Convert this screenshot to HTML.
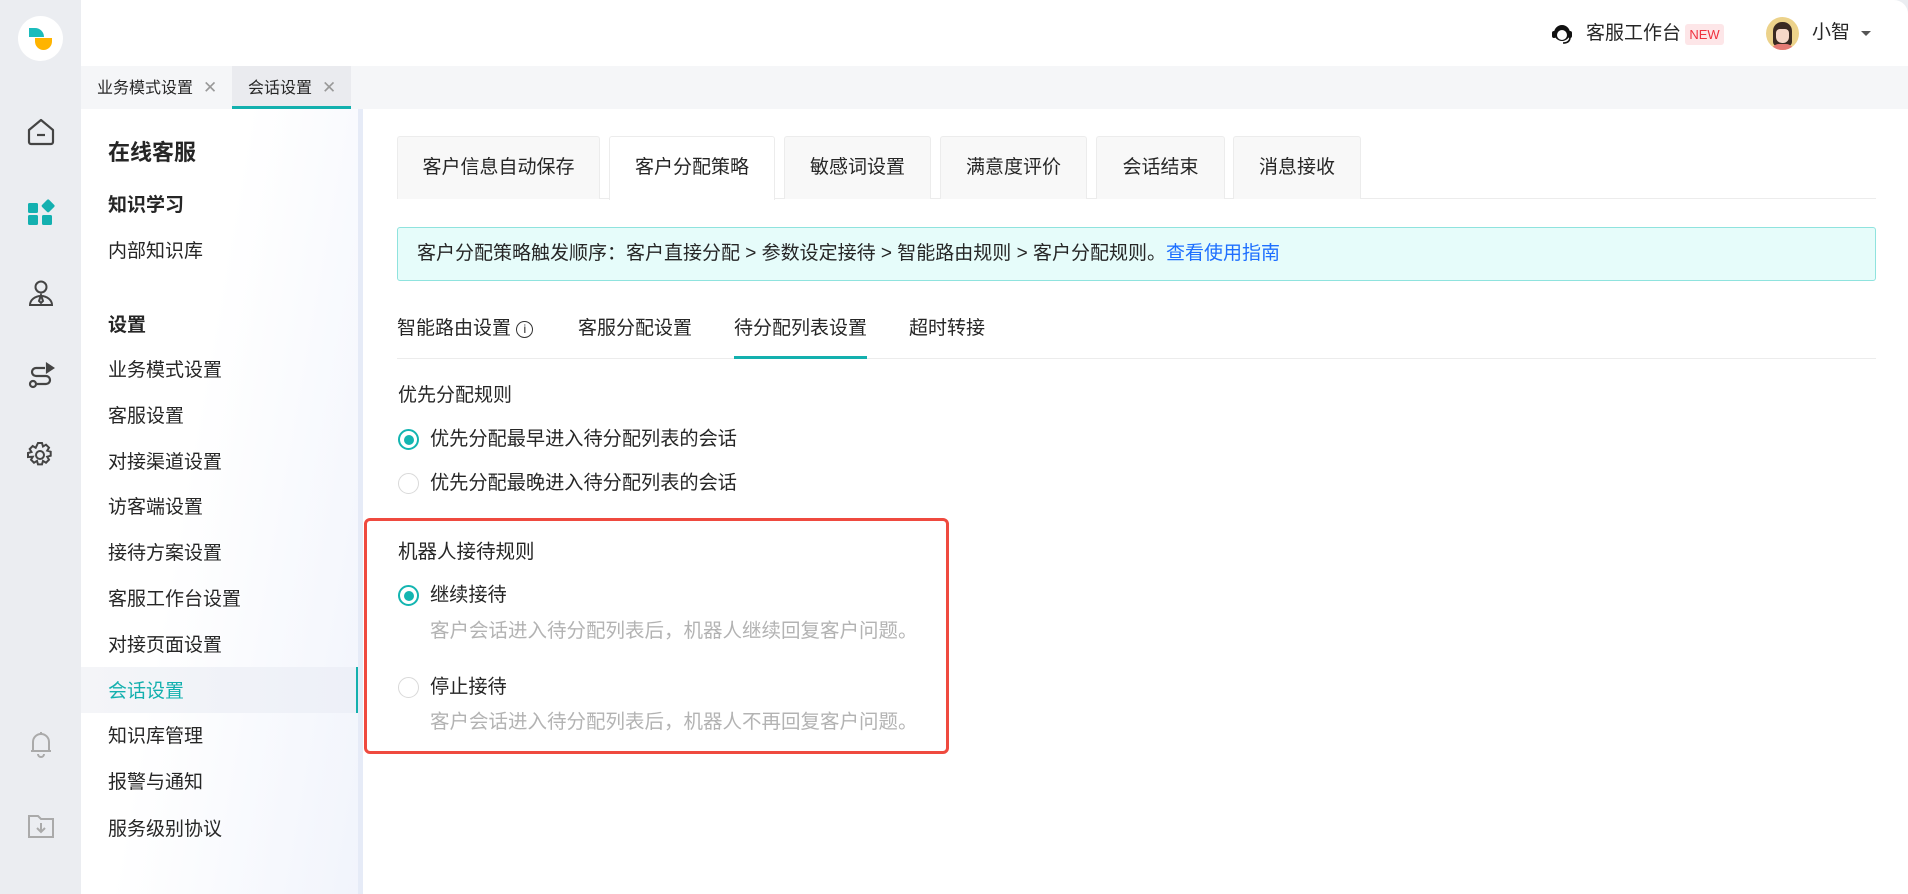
<!DOCTYPE html>
<html><head><meta charset="utf-8"><style>
*{box-sizing:border-box;margin:0;padding:0}
body{width:1908px;height:894px;overflow:hidden;background:#ebedf1;font-family:"Liberation Sans","Noto Sans CJK SC",sans-serif;color:#262626;position:relative}
.abs{position:absolute}
.top{left:81px;top:0;width:1827px;height:66px;background:#fff;border-top-right-radius:14px}
.tabbar{left:81px;top:66px;width:1827px;height:43px;background:#f5f6f8}
.tb{top:66px;height:43px;font-size:16px;line-height:43px;color:#262626}
.x{color:#999;font-size:17px;margin-left:10px}
.side{left:81px;top:109px;width:282px;height:785px;background:linear-gradient(100deg,#fff 40%,#f1f4fc)}
.main{left:363px;top:109px;width:1545px;height:785px;background:#fff}
.si{left:108px;font-size:19px;line-height:24px}
.ptab{top:136px;height:63px;border:1px solid #ececec;border-bottom:none;background:#f8f8f8;font-size:19px;line-height:62px;text-align:center;border-radius:3px 3px 0 0}
.sub{top:316px;font-size:19px;line-height:26px}
.radio{width:21px;height:21px;border-radius:50%;border:1px solid #d9d9d9;background:#fff}
.radio.on{border:2px solid #13b5b1}
.radio.on::after{content:"";position:absolute;left:3.5px;top:3.5px;width:10px;height:10px;border-radius:50%;background:#13b5b1}
.lbl{left:430px;font-size:19.2px;line-height:28px}
.desc{left:430px;font-size:19.5px;line-height:26px;color:#b3b3b3}
</style></head><body>
<div class="abs" style="left:18px;top:16px;width:45px;height:45px;border-radius:50%;background:#fff"></div>
<div class="abs" style="left:29px;top:28px;width:15px;height:9px;background:#1bbcbc;border-radius:0 9px 0 0"></div>
<div class="abs" style="left:35px;top:38px;width:17px;height:12px;background:#ffb400;border-radius:0 0 9px 9px"></div>
<svg class="abs" style="left:27px;top:118px" width="28" height="28" viewBox="0 0 28 28" fill="none" stroke="#444" stroke-width="2.2" stroke-linejoin="round"><path d="M2 12 L14 2 L26 12 V24 a2 2 0 0 1-2 2 H4 a2 2 0 0 1-2-2 Z"/><path d="M10 17h8"/></svg>
<svg class="abs" style="left:27px;top:198px" width="28" height="28" viewBox="0 0 28 28" fill="#13b0b0"><rect x="1" y="5" width="10" height="10" rx="1.5"/><rect x="14" y="2" width="10" height="10" rx="1.5" transform="rotate(45 19 10)"/><rect x="1" y="17" width="10" height="10" rx="1.5"/><rect x="15" y="17" width="10" height="10" rx="1.5"/></svg>
<svg class="abs" style="left:27px;top:279px" width="28" height="28" viewBox="0 0 28 28" fill="none" stroke="#444" stroke-width="2"><circle cx="14" cy="8" r="5.5"/><path d="M3 26 a11 9 0 0 1 22 0 Z"/><path d="M14 16 l-2 6 2 2 2-2z"/></svg>
<svg class="abs" style="left:27px;top:362px" width="28" height="28" viewBox="0 0 28 28" fill="none" stroke="#444" stroke-width="2.2"><path d="M18 6 H9 a4 4 0 0 0 0 8 H19 a4 4 0 0 1 0 8 H10"/><circle cx="6" cy="22" r="3"/><path d="M20 2 l6 4 -6 4z" fill="#444"/></svg>
<svg class="abs" style="left:26px;top:441px" width="28" height="28" viewBox="0 0 28 28" fill="none" stroke="#444" stroke-width="2"><path d="M12 2h4l1 3.5 3-1.8 3 3-1.8 3 3.5 1v4l-3.5 1 1.8 3-3 3-3-1.8-1 3.5h-4l-1-3.5-3 1.8-3-3 1.8-3L2 16v-4l3.5-1-1.8-3 3-3 3 1.8z"/><circle cx="14" cy="14" r="4"/></svg>
<svg class="abs" style="left:27px;top:730px" width="28" height="28" viewBox="0 0 28 28" fill="none" stroke="#aaa" stroke-width="2"><path d="M6 21 V12 a8 8 0 0 1 16 0 V21 H4 h20"/><path d="M11 24 a3 3 0 0 0 6 0"/><path d="M14 2v2"/></svg>
<svg class="abs" style="left:27px;top:812px" width="28" height="28" viewBox="0 0 28 28" fill="none" stroke="#aaa" stroke-width="2"><path d="M2 4 H11 l3 3 H26 V25 H2 Z"/><path d="M14 11v9 M10 16l4 4 4-4"/></svg>
<div class="abs top"></div>
<svg class="abs" style="left:1550px;top:22px" width="24" height="24" viewBox="0 0 24 24"><circle cx="12" cy="11" r="8" fill="#111"/><circle cx="12" cy="13" r="5" fill="#fff"/><rect x="2" y="9" width="4" height="7" rx="2" fill="#111"/><rect x="18" y="9" width="4" height="7" rx="2" fill="#111"/><path d="M20 15 q0 6-7 6" stroke="#111" stroke-width="1.6" fill="none"/></svg>
<div class="abs" style="left:1586px;top:21px;font-size:19px;line-height:26px">客服工作台</div>
<div class="abs" style="left:1685px;top:24px;width:39px;height:21px;background:#fde6e8;color:#f0313f;font-size:13px;line-height:21px;text-align:center;border-radius:3px">NEW</div>
<div class="abs" style="left:1766px;top:17px;width:33px;height:33px;border-radius:50%;background:#ecd28a;overflow:hidden"><div class="abs" style="left:7px;top:5px;width:19px;height:24px;border-radius:9px 9px 4px 4px;background:#3a2a22"></div><div class="abs" style="left:10px;top:12px;width:13px;height:14px;border-radius:4px 4px 6px 6px;background:#f6d8c8"></div><div class="abs" style="left:5px;top:27px;width:23px;height:10px;border-radius:8px 8px 0 0;background:#e57a74"></div></div>
<div class="abs" style="left:1812px;top:20px;font-size:19px;line-height:26px">小智</div>
<div class="abs" style="left:1861px;top:31px;width:0;height:0;border-left:5px solid transparent;border-right:5px solid transparent;border-top:5px solid #555"></div>
<div class="abs tabbar"></div>
<div class="abs tb" style="left:97px">业务模式设置<span class="x">✕</span></div>
<div class="abs" style="left:232px;top:66px;width:119px;height:43px;background:#eaebef;border-bottom:3px solid #13b0ae"></div>
<div class="abs tb" style="left:248px">会话设置<span class="x">✕</span></div>
<div class="abs side"></div>
<div class="abs" style="left:358px;top:109px;width:5px;height:785px;background:#e6ebf7"></div>
<div class="abs si" style="top:140px;font-size:22px;font-weight:bold;line-height:26px">在线客服</div>
<div class="abs si" style="top:194px;font-weight:bold">知识学习</div>
<div class="abs si" style="top:240px">内部知识库</div>
<div class="abs si" style="top:314px;font-weight:bold">设置</div>
<div class="abs si" style="top:359px">业务模式设置</div>
<div class="abs si" style="top:405px">客服设置</div>
<div class="abs si" style="top:451px">对接渠道设置</div>
<div class="abs si" style="top:496px">访客端设置</div>
<div class="abs si" style="top:542px">接待方案设置</div>
<div class="abs si" style="top:588px">客服工作台设置</div>
<div class="abs si" style="top:634px">对接页面设置</div>
<div class="abs" style="left:81px;top:667px;width:277px;height:46px;background:linear-gradient(90deg,#f4f5f8,#edf0f8);border-right:2px solid #13b0ae"></div>
<div class="abs si" style="top:680px;color:#13b0ae">会话设置</div>
<div class="abs si" style="top:725px">知识库管理</div>
<div class="abs si" style="top:771px">报警与通知</div>
<div class="abs si" style="top:818px">服务级别协议</div>
<div class="abs main"></div>
<div class="abs" style="left:397px;top:198px;width:1479px;height:1px;background:#ececec"></div>
<div class="abs ptab" style="left:397px;width:203px">客户信息自动保存</div>
<div class="abs ptab" style="left:609px;width:166px;background:#fff;height:64px">客户分配策略</div>
<div class="abs ptab" style="left:784px;width:147px">敏感词设置</div>
<div class="abs ptab" style="left:940px;width:147px">满意度评价</div>
<div class="abs ptab" style="left:1096px;width:129px">会话结束</div>
<div class="abs ptab" style="left:1233px;width:128px">消息接收</div>
<div class="abs" style="left:397px;top:227px;width:1479px;height:54px;background:#e6fcfa;border:1px solid #8fe3de;border-radius:3px;font-size:19px;line-height:52px;padding-left:19px;white-space:nowrap">客户分配策略触发顺序：客户直接分配 &gt; 参数设定接待 &gt; 智能路由规则 &gt; 客户分配规则。<span style="color:#1e6fff">查看使用指南</span></div>
<div class="abs sub" style="left:397px">智能路由设置 <span style="display:inline-block;width:17px;height:17px;border:1.5px solid #333;border-radius:50%;font-size:12px;line-height:14px;text-align:center;vertical-align:1px">i</span></div>
<div class="abs sub" style="left:578px">客服分配设置</div>
<div class="abs sub" style="left:734px">待分配列表设置</div>
<div class="abs sub" style="left:909px">超时转接</div>
<div class="abs" style="left:397px;top:358px;width:1479px;height:1px;background:#ececec"></div>
<div class="abs" style="left:734px;top:356px;width:133px;height:3px;background:#13b0ae"></div>
<div class="abs" style="left:398px;top:383px;font-size:19px;line-height:26px">优先分配规则</div>
<div class="abs radio on" style="left:398px;top:429px"></div>
<div class="abs lbl" style="top:426px">优先分配最早进入待分配列表的会话</div>
<div class="abs radio" style="left:398px;top:473px"></div>
<div class="abs lbl" style="top:470px">优先分配最晚进入待分配列表的会话</div>
<div class="abs" style="left:364px;top:518px;width:585px;height:236px;border:3px solid #ef4a3f;border-radius:6px"></div>
<div class="abs" style="left:398px;top:539px;font-size:19.5px;line-height:26px">机器人接待规则</div>
<div class="abs radio on" style="left:398px;top:585px"></div>
<div class="abs lbl" style="top:582px">继续接待</div>
<div class="abs desc" style="top:618px">客户会话进入待分配列表后，机器人继续回复客户问题。</div>
<div class="abs radio" style="left:398px;top:677px"></div>
<div class="abs lbl" style="top:674px">停止接待</div>
<div class="abs desc" style="top:709px">客户会话进入待分配列表后，机器人不再回复客户问题。</div>
</body></html>
